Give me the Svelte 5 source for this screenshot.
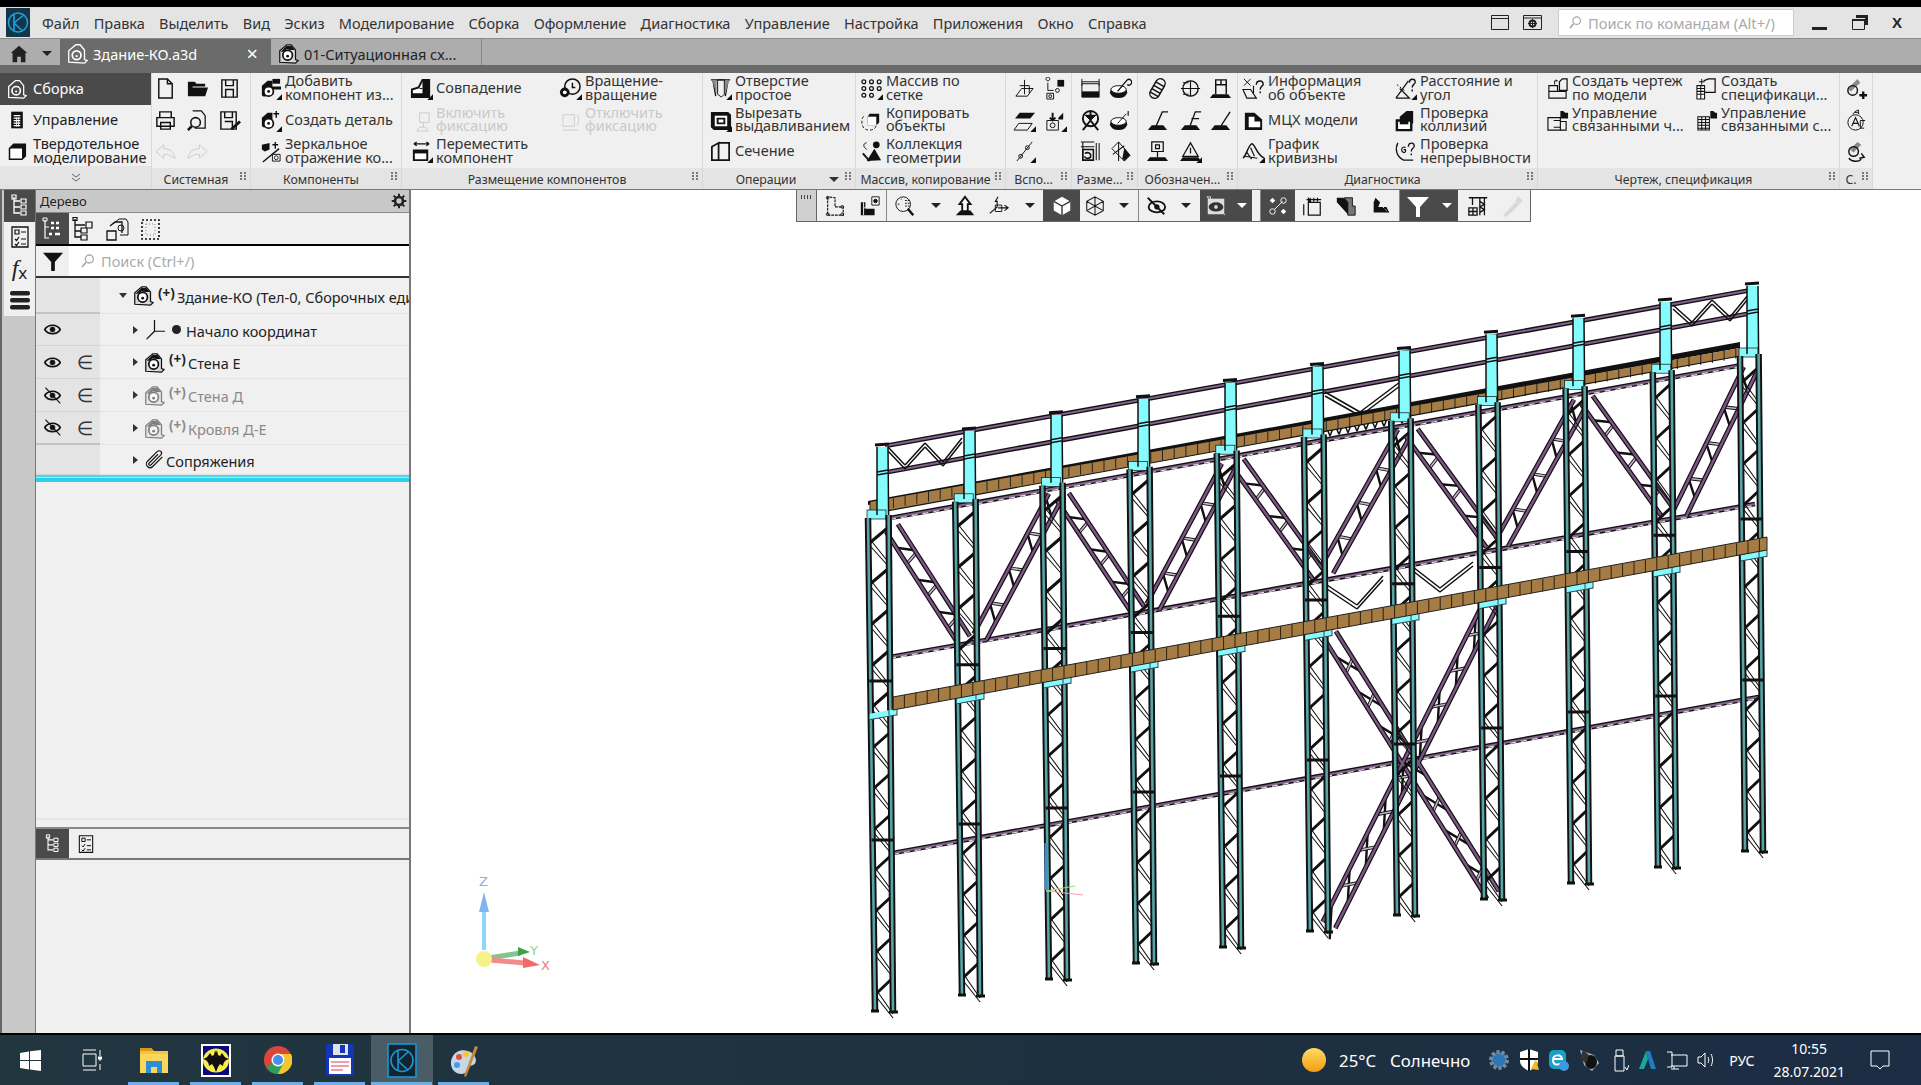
<script>
const menu=['Файл','Правка','Выделить','Вид','Эскиз','Моделирование','Сборка','Оформление','Диагностика','Управление','Настройка','Приложения','Окно','Справка'];
const tri='<path d="M24 18v6h-6z" fill="#111" stroke="none"/>';
const asm='<path d="M2 22V9l8-7h5l5 6v11l3 1-3 3z" fill="#d8d8d8" stroke="#111" stroke-width="1.400"/><path d="M3 10l7-7h5l4 5-5 0-4-1-4 3z" fill="#111" stroke="none"/><circle cx="11" cy="14" r="5.500" fill="#fff" stroke="#111" stroke-width="2"/><circle cx="11" cy="15" r="1.600" fill="#111" stroke="none"/>';
const I={
asm,
asmw:'<path d="M2 22V9l8-7h5l5 6v11l3 1-3 3z" fill="none" stroke="#fff" stroke-width="1.500"/><circle cx="11" cy="14" r="5" fill="none" stroke="#fff" stroke-width="2"/><circle cx="11" cy="15" r="1.300" fill="#fff" stroke="none"/>',
asmg:'<g opacity=".5">'+asm+'</g>',
mgmt:'<path d="M5 2h14v20H5z" fill="#111" stroke="none"/><path d="M8 6h8v1.500H8zM8 9h8v1.500H8zM8 12h8v1.500H8zM8 15h8v1.500H8zM8 18h8v1.500H8z" fill="#fff" stroke="none"/><path d="M11.500 9v11M14 9v11" stroke="#fff"/>',
solid:'<path d="M8 4h14v14l-4 4H3V9z" fill="#fff" stroke="#111" stroke-width="1.800"/><path d="M8 4h14v14l-4 4V9H3z" fill="#111" stroke="none"/>',
new:'<path d="M5 2h9l5 5v15H5z" stroke-width="1.500"/><path d="M14 2v5h5" stroke-width="1.500"/>',
open:'<path d="M2 20V5h7l2 2h9v3H7l-3 10zM6 11h17l-3 9H3z" fill="#111" stroke="none"/>',
save:'<path d="M4 3h16v18H4z" stroke-width="1.500"/><path d="M8 3v6h8V3M8 21v-8h8v8" stroke-width="1.500"/>',
print:'<path d="M6 3h12v6H6zM3 9h18v9H3zM7 14h10v7H7z" fill="#f0f0f0" stroke-width="1.500"/>',
preview:'<path d="M7 2h9l4 5v13H9" stroke-width="1.300"/><circle cx="10" cy="14" r="5" stroke-width="1.600"/><path d="M6 18l-4 4" stroke-width="2.600"/>',
saveas:'<path d="M3 3h16v18H3z" stroke-width="1.500"/><path d="M7 3v6h8V3M7 13h8v8" stroke-width="1.500"/><path d="M13 20l9-8 2 2-9 8z" fill="#111" stroke="none"/>',
undo:'<path d="M10 5l-8 7 8 7v-4h4l8 4c-1-6-5-10-12-10z" stroke="#ccc"/>',
redo:'<path d="M14 5l8 7-8 7v-4h-4l-8 4c1-6 5-10 12-10z" stroke="#ccc"/>',
add:'<path d="M3 9l6-5h5v6h9v3H14v1a8 8 0 0 1-10 6l-1-1z" fill="#111" stroke="none"/><circle cx="10" cy="15" r="5" fill="#fff" stroke="#111" stroke-width="1.800"/><circle cx="10" cy="15" r="1.500" fill="#111" stroke="none"/><path d="M14 2h8v5h-8z" fill="#111" stroke="none"/>'+tri,
part:'<path d="M3 9l6-5h5v15H4l-1-2z" fill="#111" stroke="none"/><circle cx="10" cy="15" r="5" fill="#fff" stroke="#111" stroke-width="1.800"/><circle cx="10" cy="15" r="1.500" fill="#111" stroke="none"/><path d="M18 2v7M15 5h6" stroke-width="1.500"/>'+tri,
mirror:'<path d="M3 5l8-2v7l-5 2-3-2z" fill="#111" stroke="none"/><path d="M17 2v7M14 5h6M4 23L21 9" stroke-width="1.400"/><path d="M14 15h8v7h-8z" fill="#fff"/><circle cx="18" cy="18.500" r="2"/>',
coin:'<path d="M2 21v-8l7-2 4-8h7v18z" fill="#fff" stroke="#111" stroke-width="2"/><path d="M13 3h7v14h-7zM2 17h18v4H2z" fill="#111" stroke="none"/><path d="M10 12h3" stroke="#111"/>'+tri,
fixon:'<g stroke="#ccc"><path d="M10 4h10v10H10zM14 14v5M7 23h12l-3-4h-6z"/></g>',
fixoff:'<g stroke="#ccc"><path d="M4 6h12v12H4zM19 6c2 2 2 8 0 11M4 22h16"/></g>',
move:'<path d="M4 4h16M4 4l3-2M4 4l3 2M20 4l-3-2M20 4l-3 2" stroke-width="1.200"/><path d="M4 11h14v10H4z" fill="#fff" stroke-width="2"/><path d="M4 11h14v3H4z" fill="#111" stroke="none"/>'+tri,
rot:'<circle cx="14" cy="10" r="8" stroke-width="1.600"/><path d="M14 6v5h3" stroke-width="1.500"/><circle cx="6" cy="16" r="5" fill="#111" stroke="none"/><circle cx="6" cy="16" r="2" fill="#fff" stroke="none"/>'+tri,
hole:'<path d="M2 3h20M4 3l3 17M20 3l-3 17" stroke-width="1.400"/><path d="M3 3h5v15z" fill="#888" stroke="none"/><path d="M16 3h5l-4 15z" fill="#888" stroke="none"/><path d="M9 3h7v15l-3 3-4-3z"/>'+tri,
cut:'<path d="M2 3h18l3 3v16H5l-3-3z" fill="#111" stroke="none"/><path d="M6 7h13v11H6z" fill="#fff" stroke="none"/><path d="M9 10h7v5H9z" stroke-width="2"/>'+tri,
sect:'<path d="M3 7l7-4v18H3zM10 3h11v18H10" stroke-width="1.800"/>',
arr:'<g stroke-width="1.300"><circle cx="4" cy="5" r="2"/><circle cx="12" cy="5" r="2"/><circle cx="20" cy="5" r="2"/><circle cx="4" cy="12" r="2"/><circle cx="12" cy="12" r="2"/><circle cx="20" cy="12" r="2"/><circle cx="4" cy="19" r="2"/><circle cx="12" cy="19" r="2"/></g>'+tri,
copy:'<path d="M10 5h10v9l-3 3H8V8z" fill="#111" stroke="none"/><path d="M8 8h9v9H8z" fill="#fff" stroke="none"/><path d="M4 8c-2 0-2 4-2 6 0 5 3 8 8 8 3 0 6-1 7-5" stroke-dasharray="3 2"/>',
coll:'<circle cx="17" cy="5" r="3.500" fill="#111" stroke="none"/><path d="M7 3c-3 0-4 3-2 5l2 2" /><path d="M7 22L15 9l7 12z" fill="#111" stroke="none"/><path d="M3 14l7 8" stroke="#111" stroke-width="2"/>',
aux1:'<path d="M3 20l6-8h12l-6 8z"/><path d="M12 3v15M7 9h10v8" />',
aux2:'<path d="M4 4a2 2 0 1 1 .1 0M4 6v8h6"/><path d="M14 3h7v7h-7z" fill="#111" stroke="none"/><circle cx="14" cy="14" r="2"/><path d="M3 17h7v6H3z"/><circle cx="6.500" cy="20" r="1.500"/>',
aux3:'<path d="M2 10l5-6h16l-5 6z" fill="#111" stroke="none"/><path d="M1 22l5-7h14l-5 7z"/>'+tri,
aux4:'<path d="M3 12h12v10H3z"/><path d="M15 9l5-5v7h-5z" fill="#111" stroke="none"/><path d="M9 4v8M6 9l3 3 3-3" stroke-width="2"/><circle cx="9" cy="17" r="2.500"/>'+tri,
aux5:'<path d="M4 22l16-20"/><circle cx="8" cy="17" r="2"/><circle cx="15" cy="8" r="2"/>'+tri,
dim1:'<path d="M3 2v7M21 2v7M3 5h18" /><path d="M3 7v14h18V7z" /><path d="M3 15h18v6H3z" fill="#111" stroke="none"/>',
dim2:'<ellipse cx="10" cy="16" rx="9" ry="6" fill="#111" stroke="none"/><ellipse cx="10" cy="13" rx="8" ry="4" fill="#fff" stroke="#111"/><path d="M9 15l10-12M19 3a3 3 0 1 1 0 5" stroke-width="1.400"/>',
dim3:'<circle cx="12" cy="10" r="8" stroke-width="2"/><path d="M12 2v10M4 22l8-10 8 10" stroke-width="2"/><path d="M6 6l6 6 6-6" fill="#111"/>',
dim4:'<ellipse cx="10" cy="16" rx="9" ry="6" fill="#111" stroke="none"/><ellipse cx="10" cy="13" rx="8" ry="4" fill="#fff" stroke="#111"/><path d="M9 15l9-10"/><path d="M20 2v5" stroke-width="1.200"/>',
dim5:'<path d="M2 2h14M2 7h14M4 2v20M18 3v18M21 3v18" stroke-width="1.100"/><path d="M4 10h11v11H4z" stroke-width="1.600"/><path d="M6 14c4-2 7 0 6 4-3 2-6 1-6-1" stroke-width="1.600"/>',
dim6:'<path d="M10 2l12 14-6 6L3 9z"/><path d="M10 2v20M4 15l12-9" stroke-width="1.100"/><path d="M16 8l6 8-6 6-2-3z" fill="#111" stroke="none"/>',
sym1:'<g transform="rotate(30 12 12)"><rect x="7" y="1" width="10" height="22" rx="5" stroke-width="1.500"/><path d="M7 7h10M7 11h10M7 15h10M7 19h10" stroke-width="1.500"/></g>',
sym2:'<circle cx="12" cy="12" r="8" stroke-width="1.400"/><path d="M2 12h20M12 4v16" stroke-width="1.200"/><path d="M4 6h6M4 18h6"/>',
sym3:'<path d="M2 22h20l-4-5H6z" fill="#111" stroke="none"/><path d="M10 19L17 3h6" stroke-width="1.400"/>',
sym4:'<path d="M2 22h20l-4-5H6z" fill="#111" stroke="none"/><path d="M11 19L17 3h6M13 10h8" stroke-width="1.400"/>',
sym5:'<path d="M2 22h20l-4-5H6z" fill="#111" stroke="none"/><path d="M8 18l3 2L22 3" stroke-width="1.400"/>',
sym6:'<path d="M1 22h22l-3-4H4z" fill="#111" stroke="none"/><path d="M12 18v-6M6 2h12v10H6zM10 5h4v4h-4z" stroke-width="1.300"/>',
sym7:'<path d="M1 22h22l-3-4H4z" fill="#111" stroke="none"/><path d="M7 18V3h11v15M7 8h11M12.500 3v5" stroke-width="1.500"/>',
sym8:'<path d="M1 22h22l-3-4H4z" fill="#111" stroke="none"/><path d="M4 17L12 3l8 14zM12 8v6" stroke-width="1.300"/>'+tri,
info:'<path d="M2 2l7 7M2 9l7-7" stroke-width="1"/><path d="M1 13h8l6 9H5zM12 9v8" stroke-width="1.200"/><path d="M15 8c0-5 8-5 7 0-1 2-3 2-3 5M19 15v2" stroke-width="1.500"/>',
mch:'<path d="M3 4h10l8 7v11H3z" fill="#111" stroke="none"/><path d="M7 8h6v5h6v6H7z" fill="#fff" stroke="none"/>',
curve:'<path d="M1 19c3-2 6-14 9-15 4 0 4 10 13 15" stroke-width="1.500"/><path d="M5 13l5 7M9 8l4 9M3 17l13 2" stroke-width="1.200"/>'+tri,
dist:'<path d="M2 22L15 4M2 22h14L6 12" stroke-width="1.300"/><path d="M3 8l9 7" stroke-dasharray="2 2"/><path d="M16 6c0-5 7-5 6 0-1 2-3 2-3 5M19 13v2" stroke-width="1.500"/>'+tri,
coll2:'<path d="M6 21V8l7-6h7v13H9" fill="#111" stroke="none"/><path d="M3 12h15v10H3z" fill="#fff" stroke="#111" stroke-width="2.500"/><path d="M6 12h9v4H6z" fill="#111" stroke="none"/>',
cont:'<path d="M4 3c-3 6-2 14 6 18h10" stroke-width="1.300"/><path d="M8 10c0-3 3-3 4-2M8 10c0 3 3 4 4 2v-2h-2" stroke-width="1.200"/><path d="M15 7c0-5 7-5 6 0-1 2-3 2-3 5M18 14v2" stroke-width="1.400"/>',
draw1:'<path d="M3 9h9v6H3zM3 15h9M12 15h9v7H3V9" stroke-width="1.200"/><path d="M14 14V5l3-3h5v12h-8z" stroke-width="1.300"/><path d="M9 8V4h3M10 3l2 1" />',
spec1:'<path d="M9 4l5-2h7v14H9" stroke-width="1.300"/><path d="M2 9h8v14H2zM2 12h8M2 15h8M2 18h8M6 9v14" fill="#fff" stroke-width="1.100"/><path d="M4 5h6M7 2v6"/>',
draw2:'<path d="M2 9h13v13H2zM8 12h7v7H8" stroke-width="1.200"/><path d="M15 2h3l2 2h3v6h-8z" fill="#111" stroke="none"/><path d="M15 13h6v9h-6" stroke-width="1.200"/>',
spec2:'<path d="M3 8h12v14H3zM3 11h12M3 14h12M3 17h12M3 20h12M7 8v14M11 8v14" stroke-width="1.100"/><path d="M16 2h3l2 2h2v6h-7z" fill="#111" stroke="none"/>',
bolt1:'<path d="M3 12l10-10 3 4-10 9z" fill="#888" stroke="none"/><circle cx="8" cy="14" r="5" stroke-width="1.500"/><path d="M15 19h8M19 15v8" stroke-width="2.500"/>',
bolt2:'<circle cx="11" cy="14" r="8"/><path d="M7 18l4-9 4 9M8.500 15h5" stroke-width="1.200"/><path d="M16 12h5M16 12v8h4" stroke-width="1"/><path d="M10 3l4-2v4M8 5c2-2 5-2 7 0"/>',
bolt3:'<path d="M5 10l8-8 4 3-8 8z" fill="#888" stroke="none"/><circle cx="9" cy="12" r="5" stroke-width="1.500"/><path d="M4 19c3 4 10 4 13 1M17 14l3 4-5 1" stroke-width="1.500"/>',
vL:'<path d="M4 2v20h17V13h-9V3z" stroke-width="1.200" stroke-dasharray="3 1"/><circle cx="4" cy="3" r="1.500"/><circle cx="4" cy="21" r="1.500"/><circle cx="20" cy="21" r="1.500"/><circle cx="20" cy="13" r="1.500"/>',
vT:'<path d="M2 22V8h5V22zM7 22V15h10v7z" fill="#111" stroke="none"/><path d="M5 22V8M5 15l3-3" stroke="#fff"/><path d="M14 2h8v9h-8z" fill="#fff"/><circle cx="18" cy="6.500" r="2" fill="#111"/>',
vZ:'<circle cx="10" cy="10" r="8"/><path d="M15 15l6 7" stroke-width="2.600"/><path d="M8 4v1M12 6h5M12 9h5M12 12h5M4 10h3" stroke-dasharray="2 1"/>',
vUp:'<path d="M12 2l6 8h-3v8H9v-8H6z" fill="#fff" stroke-width="2"/><path d="M2 22l5-5h11l4 5z" fill="#111" stroke="none"/>',
vAx:'<path d="M11 2l-3 5h2v6l-8 7M11 14h10M18 11l4 3-4 3" stroke-width="1.200"/><path d="M8 11h7v7H8z"/>',
vCube:'<path d="M12 2l9 5v10l-9 5-9-5V7z" fill="#fff" stroke="none"/><path d="M3 7l9 5 9-5M12 12v10" stroke="#333" stroke-width="1.500"/>',
vBox:'<path d="M12 2l9 5v10l-9 5-9-5V7zM3 7l9 5 9-5M12 12v10M3 17l9-5 9 5M12 2v10" stroke-width="1.100"/>',
vEye:'<ellipse cx="13" cy="13" rx="9" ry="6" stroke-width="2"/><circle cx="13" cy="13" r="2.500" fill="#111"/><path d="M3 3l18 18" stroke-width="2"/>',
vEyeD:'<path d="M2 2l4 0v4M2 2l20 20" stroke="#ddd"/><path d="M3 4h18v17H3z" fill="#ddd" stroke="none"/><ellipse cx="12" cy="13" rx="8" ry="5" fill="#333" stroke="none"/><circle cx="12" cy="13" r="2" fill="#ddd" stroke="none"/>',
vSnap:'<path d="M8 16L17 7" stroke="#fff"/><circle cx="6" cy="18" r="3" stroke="#fff"/><circle cx="18" cy="6" r="3" stroke="#fff"/><path d="M6 3l3 3-3 3-3-3zM18 15l3 3-3 3-3-3z" fill="#fff" stroke="none"/>',
vWall:'<path d="M8 8h13v14H8zM6 5h16M10 3v4M14 3v4M18 3v4M3 10v12" stroke-width="1.300"/><path d="M8 3l3 5H8z" fill="#111"/>',
vWalls:'<path d="M2 3h7l6 5v14L2 8z" fill="#111" stroke="none"/><path d="M10 3h9v9h3v10H14V8z" fill="#777" stroke="#111"/>',
vBr:'<path d="M6 3l5 5-2 5 9 0 3 6H4V8z" fill="#111" stroke="none"/><path d="M8 4l3 3M11 9l3 3M14 13l4 4" stroke="#fff" stroke-dasharray="2 2"/>',
funnel:'<path d="M1 3h22l-9 10v10h-4V13z" fill="#fff" stroke="none"/>',
funk:'<path d="M1 3h22l-9 10v10h-4V13z" fill="#111" stroke="none"/>',
crane:'<path d="M2 3h20M6 3v8M14 3v19M19 3v19M14 7l5 3-5 3 5 3-5 3" stroke-width="1.400"/><path d="M2 14h9v8H2zM2 18h9M6.500 14v8" stroke-width="1.400"/>',
pipette:'<path d="M3 21l12-13 3 3-13 12-3 0zM15 6l3-4 4 4-4 4z" fill="#d8d8d8" stroke="#d8d8d8"/>',
gear:'<circle cx="12" cy="12" r="6" stroke="#222" stroke-width="4"/><path d="M12 1v4M12 19v4M1 12h4M19 12h4M4 4l3 3M17 17l3 3M4 20l3-3M17 7l3-3" stroke="#222" stroke-width="3"/>',
tree:'<path d="M6 3v16h6M6 7h6M6 13h6" stroke-width="1.300"/><path d="M4 1h4v4H4zM13 5h5v4h-5zM13 11h5v4h-5zM13 17h5v4h-5z" stroke-width="1.200"/>',
treeW:'<g stroke="#fff"><path d="M6 3v16h6M6 7h6M6 13h6" stroke-width="1.300"/><path d="M4 1h4v4H4zM13 5h5v4h-5zM13 11h5v4h-5zM13 17h5v4h-5z" stroke-width="1.200"/></g>',
list:'<path d="M4 2h16v20H4z" stroke-width="1.300"/><path d="M7 5h4v4H7zM13 7h5M7 14l1.500 1.500L11 12M13 14h5M7 19l1.500 1.500L11 17M13 19h5" stroke-width="1.200"/>',
stack:'<rect x="2" y="3" width="20" height="4.500" rx="2" fill="#222" stroke="none"/><rect x="2" y="10" width="20" height="4.500" rx="2" fill="#222" stroke="none"/><rect x="2" y="17" width="20" height="4.500" rx="2" fill="#222" stroke="none"/>',
numW:'<g stroke="#fff"><path d="M4 3v18h4M4 10h4" stroke-width="1.200"/><path d="M2 1h4v3H2z"/></g><path d="M10 6h3M15 6h3M10 11h3M15 11h3M8 17h3M14 17h5" stroke="#fff" stroke-width="2.600"/>',
tr2:'<path d="M5 2v18h6M5 8h10M5 14h6" stroke-width="1.300"/><path d="M3 0.500h4v3H3zM16 5h6v6h-6zM11 11h6v5h-6zM11 18h6v5h-6z" stroke-width="1.200"/>',
refs:'<path d="M8 7l6-5h7l2 3v13h-8"/><path d="M5 9l5-4h7v11" stroke-width="1.300"/><path d="M2 14h9v9H2z" stroke-width="1.300"/><circle cx="16" cy="11" r="3"/>',
sel:'<path d="M4 3h17v19H4z" stroke-dasharray="2 2" stroke-width="1.600"/><path d="M8 7h9v11H8z" stroke-dasharray="1 2" stroke="#888"/>',
search:'<circle cx="14" cy="9" r="6" stroke="#aaa" stroke-width="2"/><path d="M9 14l-6 7" stroke="#aaa" stroke-width="2.600"/>',
eye:'<path d="M1 12c5-8 17-8 22 0-5 8-17 8-22 0z" stroke-width="2.400"/><circle cx="12" cy="12" r="3.500" fill="#111"/>',
eyeoff:'<path d="M1 12c5-8 17-8 22 0-5 8-17 8-22 0z" stroke-width="2.400"/><circle cx="12" cy="12" r="3.500" fill="#111"/><path d="M2 1l21 22" stroke-width="1.600"/>',
axes:'<path d="M12 1v13M12 14h12M12 14L3 23" stroke-width="1.400"/>',
clip:'<path d="M21 9L10 20c-4 4-10-2-6-6L15 3c3-3 7 1 4 4L8 18c-1 2-4-1-2-2L16 6" stroke-width="1.300"/>',
home:'<path d="M12 3l9 8h-2v10h-5v-6h-4v6H5V11H3z" fill="#222" stroke="none"/>',
};
const R=[
{l:'Системная',w:99,p:2,cols:[{w:32,it:[{i:'new'},{i:'print'},{i:'undo'}]},{w:32,it:[{i:'open'},{i:'preview'},{i:'redo'}]},{w:32,it:[{i:'save'},{i:'saveas'}]}]},
{l:'Компоненты',w:151,p:8,cols:[{w:140,it:[{i:'add',t:['Добавить','компонент из...']},{i:'part',t:['Создать деталь']},{i:'mirror',t:['Зеркальное','отражение ко...']}]}]},
{l:'Размещение компонентов',w:301,p:8,cols:[{w:149,it:[{i:'coin',t:['Совпадение']},{i:'fixon',t:['Включить','фиксацию'],d:1},{i:'move',t:['Переместить','компонент']}]},{w:140,it:[{i:'rot',t:['Вращение-','вращение']},{i:'fixoff',t:['Отключить','фиксацию'],d:1}]}]},
{l:'Операции',w:153,p:6,a:1,cols:[{w:145,it:[{i:'hole',t:['Отверстие','простое']},{i:'cut',t:['Вырезать','выдавливанием']},{i:'sect',t:['Сечение']}]}]},
{l:'Массив, копирование',w:150,p:4,cols:[{w:145,it:[{i:'arr',t:['Массив по','сетке']},{i:'copy',t:['Копировать','объекты']},{i:'coll',t:['Коллекция','геометрии']}]}]},
{l:'Вспо...',w:66,p:7,cols:[{w:31,it:[{i:'aux1'},{i:'aux3'},{i:'aux5'}]},{w:28,it:[{i:'aux2'},{i:'aux4'}]}]},
{l:'Разме...',w:66,p:7,cols:[{w:30,it:[{i:'dim1'},{i:'dim3'},{i:'dim5'}]},{w:28,it:[{i:'dim2'},{i:'dim4'},{i:'dim6'}]}]},
{l:'Обозначен...',w:100,p:8,cols:[{w:33,it:[{i:'sym1'},{i:'sym3'},{i:'sym6'}]},{w:30,it:[{i:'sym2'},{i:'sym4'},{i:'sym8'}]},{w:28,it:[{i:'sym7'},{i:'sym5'}]}]},
{l:'Диагностика',w:300,p:4,cols:[{w:152,it:[{i:'info',t:['Информация','об объекте']},{i:'mch',t:['МЦХ модели']},{i:'curve',t:['График','кривизны']}]},{w:140,it:[{i:'dist',t:['Расстояние и','угол']},{i:'coll2',t:['Проверка','коллизий']},{i:'cont',t:['Проверка','непрерывности']}]}]},
{l:'Чертеж, спецификация',w:302,p:8,cols:[{w:149,it:[{i:'draw1',t:['Создать чертеж','по модели']},{i:'draw2',t:['Управление','связанными ч...']}]},{w:140,it:[{i:'spec1',t:['Создать','спецификаци...']},{i:'spec2',t:['Управление','связанными с...']}]}]},
{l:'С.',w:33,p:5,cols:[{w:26,it:[{i:'bolt1'},{i:'bolt2'},{i:'bolt3'}]}]},
];
const VT=[
{w:36,i:'vL'},{w:34,i:'vT',s:1},{w:36,i:'vZ'},{w:26,a:1},{w:32,i:'vUp'},{w:36,i:'vAx'},{w:26,a:1},
{w:37,i:'vCube',k:1},{w:30,i:'vBox'},{w:29,a:1,s:1},{w:33,i:'vEye'},{w:28,a:1},
{w:32,i:'vEyeD',k:1},{w:20,a:1,k:1},{w:9,s:1},{w:34,i:'vSnap',k:1},{w:34,i:'vWall'},{w:34,i:'vWalls'},{w:37,i:'vBr',s:1},
{w:36,i:'funnel',k:1},{w:22,a:1,k:1},{w:3},{w:34,i:'crane'},{w:35,i:'pipette'},
];
const rows=[
{name:'Здание-КО (Тел-0, Сборочных единиц-2, Деталей-0)',ic:'asm',pl:1,ind:83,open:1,eye:'',sep:1},
{name:'Начало координат',ic:'axes',dot:1,ind:97,eye:'eye'},
{name:'Стена Е',ic:'asm',pl:1,ind:97,eye:'eye',el:1},
{name:'Стена Д',ic:'asmg',pl:1,ind:97,eye:'eyeoff',el:1,dim:1},
{name:'Кровля Д-Е',ic:'asmg',pl:1,ind:97,eye:'eyeoff',el:1,dim:1,sep:1},
{name:'Сопряжения',ic:'clip',ind:97,eye:''},
];
// ---- model geometry
const f=n=>n.toFixed(1);
const L=(a,b,c,d)=>`M${f(a)} ${f(b)}L${f(c)} ${f(d)}`;
const g={railK:'',railP:'',railW:'',tie:'',dK:'',dT:'',dR:'',chK:'',chT:'',zk:'',zt:'',cyE:'',bar:'',upCell:'',loCell:'',brk:'',brkE:''};
function rail(a,b,c,d,ties){g.railK+=L(a,b,c,d);g.railP+=L(a,b,c,d);if(ties)g.railW+=L(a,b+1.5,c,d+1.5);}
rail(885,446,1757,289);rail(888,472,1752,313);rail(890,518,1742,365,1);rail(890,657,1755,504,1);rail(893,853,1764,696,1);
function diag(a,b,c,d){const dx=c-a,dy=d-b,l=Math.hypot(dx,dy),nx=-dy/l*7,ny=dx/l*7;
g.dK+=L(a+nx,b+ny,c+nx,d+ny)+L(a-nx,b-ny,c-nx,d-ny);
const n=Math.round(l/20);for(let k=1;k<n;k++){const t=k/n;const ax=a+dx*t+nx,ay=b+dy*t+ny;const s=t+(k%2?.09:-.03);const bx=a+dx*s-nx,by=b+dy*s-ny;if(k%2)g.dT+=L(ax,ay,bx,by);else g.dR+=L(ax,ay,bx,by);}}
[[892,528,964,640],[980,637,1055,497],[1063,497,1138,610],[1153,607,1228,467],[1238,463,1320,577],[1327,570,1404,433],[1412,433,1492,543],[1502,543,1580,403],[1587,400,1668,513],[1680,513,1750,370],[1330,635,1493,895],[1491,603,1329,925]].forEach(d=>diag(...d));
function poly(pts,key){for(let i=0;i<pts.length-1;i++)g[key]+=L(pts[i][0],pts[i][1],pts[i+1][0],pts[i+1][1]);}
const dbl=p=>{poly(p,'tie');poly(p.map(q=>[q[0],q[1]+4]),'tie');};
dbl([[888,447],[905,465],[925,443],[943,462],[962,438]]);
dbl([[1673,305],[1692,322],[1712,300],[1730,317],[1748,295]]);
dbl([[1325,392],[1360,412],[1400,382]]);
dbl([[1327,585],[1357,605],[1383,576]]);dbl([[1413,567],[1440,588],[1473,562]]);
for(let x=1325;x<1400;x+=9){g.tie+=L(x,424-(x-1325)*.177,x+5,436-(x-1325)*.177)+L(x+5,436-(x-1325)*.177,x+10,423-(x-1325)*.177);}
const cols=[];
for(let i=0;i<11;i++){
 const rt=888+87*i,yt=447-16.1*i,rb=893+87*i,yb=1011-16*i,lt=868+87.2*i,yl=518-16.2*i,lb=875+87*i;
 const lx=y=>lt+(lb-lt)*(y-yl)/(yb-yl),rx=y=>rt+(rb-rt)*(y-yt)/(yb-yt);
 const ys=yt+68;
 g.chK+=L(lt,yl,lb,yb)+L(rx(ys),ys,rb,yb);
 g.chT+=L(lt,yl,lb,yb)+L(rx(ys),ys,rb,yb);
 g.cyE+=L(rt,yt,rx(ys),ys)+L(rt-11,yt,rt-11,ys)+L(rt-11,yt+25,rt,yt+23)+L(rt-11,yt+28,rt,yt+26);
 g.bar+=L(rt-13,yt-2,rt+1,yt-3);
 g.bar+=L(lx(yb)-4,yb,lx(yb)+4,yb)+L(rb-4,yb+1,rb+5,yb+1);
 cols.push({x:rt-11,y:yt,h:70,lx:lt,ly:yl-8});
 for(let y=yb-16;y>yl+12;y-=41){const a=lx(y),b=rx(y-17),c=rx(y+23);g.zk+=L(a,y,b,y-17);g.zt+=L(a,y,c,y+23)+L(a+3,y-3,c,y+19);}
 const by=840-16*i,my=681-16.2*i;
 g.bar+=L(lx(by)-1,by,rx(by)+2,by)+L(lx(my)-1,my,rx(my)+2,my);
 const bb=709.5-.1822*(rb-893);
 const x0=lx(bb)-1,x1=rb+4;
 g.brk+=`M${f(x0)} ${f(bb+(rb-x0)*.18)}L${f(x1)} ${f(bb-4*.18)}v6L${f(x0)} ${f(bb+(rb-x0)*.18+6)}z`;
 g.brkE+=L(x0,bb+(rb-x0)*.18+6,x1,bb-4*.18+6)+L(rb-4,bb,rb-4,bb+6)+L(rb+4,bb-1,rb+4,bb+6);
}
for(let x=870;x<1740;x+=11.7){const y=502-.177*(x-870);g.upCell+=L(x,y,x,y+10);}
for(let x=893;x<1767;x+=11.4){const y=697-.1822*(x-893);g.loCell+=L(x,y,x,y+12.7);}
const taskU=[[129,51],[191,51],[253,51],[315,51],[372,61],[439,51]];
</script>

{#snippet ic(n,s=22)}
<svg class="ic" width={s} height={s} viewBox="0 0 24 24" fill="none" stroke="#111">{@html I[n]}</svg>
{/snippet}
{#snippet grip()}
<span class="grip"><i></i><i></i><i></i><i></i><i></i><i></i></span>
{/snippet}

<div class="win">
 <div class="black"></div>
 <header class="menubar">
  <div class="logo"><svg width="24" height="29" viewBox="0 0 24 29"><rect width="24" height="29" fill="#15354a"/><circle cx="12" cy="14.500" r="9.500" fill="none" stroke="#19a3dc" stroke-width="1.600"/><path d="M8 6v17M8 15L17 7.500M8 15l8 7.500" fill="none" stroke="#19a3dc" stroke-width="1.600"/></svg></div>
  <nav class="menu">{#each menu as m}<span>{m}</span>{/each}</nav>
  <div class="wtools">
   <svg width="18" height="15" viewBox="0 0 18 15"><path d="M.5.500h17v14H.5zM.5 3.500h17" fill="none" stroke="#222"/></svg>
   <svg class="wgear" width="19" height="15" viewBox="0 0 19 15"><path d="M.5.500h18v14H.5zM.5 3h18" fill="none" stroke="#222"/><circle cx="9.500" cy="8.500" r="3" fill="none" stroke="#222" stroke-width="2"/><path d="M9.500 4v9M5 8.500h9" stroke="#222"/></svg>
   <div class="cmd"><svg width="15" height="15" viewBox="0 0 24 24" fill="none">{@html I.search}</svg><span>Поиск по командам (Alt+/)</span></div>
   <svg class="wmin" width="15" height="15" viewBox="0 0 15 15"><path d="M0 12h15v3H0z" fill="#222"/></svg>
   <svg class="wmax" width="16" height="15" viewBox="0 0 16 15"><path d="M4 0h12v10h-3V3H4z" fill="#222"/><path d="M.5 4.500h12v10H.5z" fill="#e4e4e4" stroke="#222"/><path d="M0 4h13v2H0z" fill="#222"/></svg>
   <span class="wclose">X</span>
  </div>
 </header>
 <div class="tabs">
  <div class="homebtn">{@render ic('home',22)}<span class="caret"></span></div>
  <div class="tab on">{@render ic('asmw',21)}<span>Здание-КО.a3d</span><b>×</b></div>
  <div class="tab">{@render ic('asm',21)}<span>01-Ситуационная сх...</span></div>
 </div>
 <div class="strip"></div>
 <section class="ribbon">
  <div class="modes">
   <div class="mode cur">{@render ic('asmw',20)}<span>Сборка</span></div>
   <div class="mode">{@render ic('mgmt',20)}<span>Управление</span></div>
   <div class="mode">{@render ic('solid',20)}<span>Твердотельное<br>моделирование</span></div>
   <div class="modefoot"><svg width="10" height="9" viewBox="0 0 10 9" fill="none" stroke="#666"><path d="M1 1l4 3 4-3M1 5l4 3 4-3"/></svg></div>
  </div>
  {#each R as r}
  <div class="grp" style:width="{r.w}px">
   <div class="gbody" style:padding-left="{r.p}px">
    {#each r.cols as c}
    <div class="gcol" style:width="{c.w}px">
     {#each c.it as it}
     <div class="item" class:dim={it.d}>{@render ic(it.i,23)}{#if it.t}<span class="itxt">{#each it.t as l}<span>{l}</span>{/each}</span>{/if}</div>
     {/each}
    </div>
    {/each}
   </div>
   <div class="glabel"><span>{r.l}</span>{#if r.a}<span class="caret k"></span>{/if}{@render grip()}</div>
  </div>
  {/each}
 </section>
 <main class="body">
  <aside class="rail">
   <div class="rbtns">
    <div class="rb cur">{@render ic('treeW',24)}</div>
    <div class="rb">{@render ic('list',24)}</div>
    <div class="rb fx"><em>f</em><span>x</span></div>
    <div class="rb">{@render ic('stack',24)}</div>
   </div>
  </aside>
  <div class="panel">
   <div class="phead"><span>Дерево</span>{@render ic('gear',16)}</div>
   <div class="ptools">
    <div class="pt cur">{@render ic('numW',24)}</div>
    <div class="pt p2">{@render ic('tr2',24)}</div>
    <div class="pt p3">{@render ic('refs',24)}</div>
    <div class="pt">{@render ic('sel',24)}</div>
   </div>
   <div class="psearch">
    <div class="pf">{@render ic('funk',22)}</div>
    <svg width="16" height="16" viewBox="0 0 24 24" fill="none">{@html I.search}</svg>
    <span>Поиск (Ctrl+/)</span>
   </div>
   <div class="tree">
    {#each rows as r,i}
    <div class="row" class:dim={r.dim} class:first={i==0} class:last={i==5}>
     <div class="gut" class:sep={r.sep}>
      <span class="ge">{#if r.eye}{@render ic(r.eye,17)}{/if}</span>
      <span class="gi">{#if r.el}∈{/if}</span>
     </div>
     <div class="cell" style:padding-left="{r.ind-64}px">
      <span class="arw" class:down={r.open}></span>
      {@render ic(r.ic,21)}
      {#if r.dot}<span class="dot"></span>{/if}
      {#if r.pl}<span class="pl">(+)</span>{/if}
      <span class="nm">{r.name}</span>
     </div>
    </div>
    {/each}
   </div>
   <div class="cyan"></div>
   <div class="pfill"><span class="faint"></span></div>
   <div class="ptabs">
    <div class="pt cur">{@render ic('treeW',20)}</div>
    <div class="pt">{@render ic('list',20)}</div>
   </div>
   <div class="pfill2"></div>
  </div>
  <div class="view">
   <div class="vbar">
    <div class="vgrip"><span></span></div>
    {#each VT as v}
    <div class="vb" class:k={v.k} class:s={v.s} style:width="{v.w}px">
     {#if v.i}{@render ic(v.i,v.i=='funnel'?24:22)}{/if}
     {#if v.a}<span class="caret" class:w={v.k}></span>{/if}
    </div>
    {/each}
   </div>
   <svg class="model" viewBox="411 190 1510 843" fill="none">
    <g stroke-linecap="butt">
     <path d={g.railK} stroke="#111" stroke-width="4.800"/>
     <path d={g.railP} stroke="#86608f" stroke-width="2"/>
     <path d={g.railW} stroke="#ddd" stroke-width="1.200" stroke-dasharray="6 5"/>
     <path d={g.tie} stroke="#111" stroke-width="1.500"/>
     <path d={g.dT} stroke="#111" stroke-width="2.400"/>
     <path d={g.dR} stroke="#111" stroke-width="3.400"/>
     <path d={g.dR} stroke="#c9afcf" stroke-width="1.600"/>
     <path d={g.dK} stroke="#111" stroke-width="4.800"/>
     <path d={g.dK} stroke="#7d5586" stroke-width="2.400"/>
     <path d="M868 501L1740 342V348L868 505z" fill="#111"/>
     <path d="M870 502L1740 348V356L870 514z" fill="#a67c45"/>
     <path d={g.upCell} stroke="#222" stroke-width="1"/>
     <path d="M870 514L1740 356" stroke="#111" stroke-width="1.200"/>
     {#each cols as c}
     <rect x={c.x} y={c.y} width="11" height={c.h} fill="#86fbfd"/>
     <rect x={c.lx-1} y={c.ly} width="19" height="9" fill="#86fbfd" stroke="#111" stroke-width=".7"/>
     {/each}
     <path d={g.cyE} stroke="#111" stroke-width="1.500"/>
     <path d={g.zt} stroke="#111" stroke-width="1.100"/>
     <path d={g.zk} stroke="#111" stroke-width="3"/>
     <path d={g.chK} stroke="#111" stroke-width="6.500"/>
     <path d={g.chT} stroke="#58a4a6" stroke-width="2.600"/>
     <path d={g.bar} stroke="#111" stroke-width="3"/>
     <path d={g.brk} fill="#86fbfd"/>
     <path d={g.brkE} stroke="#345" stroke-width="1"/>
     <path d="M893 697L1767 537V550L893 710z" fill="#a67c45" stroke="#222" stroke-width="1"/>
     <path d={g.loCell} stroke="#2a2014" stroke-width="1"/>
     <path d="M1046 843V890" stroke="#3f8fc6" stroke-width="3"/>
     <path d="M1046 891L1075 886" stroke="#9ce05a" stroke-width="1.200"/>
     <path d="M1046 891L1083 895" stroke="#f2a0a8" stroke-width="1.200"/>
    </g>
    <g font-family="'DejaVu Sans',sans-serif" font-size="13">
     <path d="M484 950V905" stroke="#8fd4fb" stroke-width="4"/>
     <path d="M484 892L489 912H479z" fill="#7fb6f0"/>
     <path d="M489 958L520 953" stroke="#86c48c" stroke-width="5"/>
     <path d="M518 947L530 952 518 956z" fill="#3fa048"/>
     <path d="M490 960L525 963" stroke="#f58a8a" stroke-width="5"/>
     <path d="M523 957L540 965 523 968z" fill="#f06a6a"/>
     <circle cx="484" cy="959" r="8" fill="#f6f28a"/>
     <text x="479" y="886" fill="#7fb0f0">Z</text>
     <text x="530" y="955" fill="#7fdc8a">Y</text>
     <text x="541" y="970" fill="#f27a7a">X</text>
    </g>
   </svg>
  </div>
 </main>
 <footer class="task">
  <div class="tleft">
   <div class="ti"><svg width="21" height="21" viewBox="0 0 21 21"><path d="M0 3l9-1.500V10H0zM10 1.300L21 0v10H10zM0 11h9v8.500L0 18zM10 11h11v10l-11-1.500z" fill="#fff"/></svg></div>
   <div class="ti"><svg width="20" height="22" viewBox="0 0 20 22" fill="none" stroke="#fff"><path d="M1 1h13M1 21h13M1 5h13v12H1zM18 1v6M18 10v2M18 15v6"/><rect x="16.500" y="8" width="3" height="2" fill="#fff"/></svg></div>
   <div class="ti"><svg width="28" height="26" viewBox="0 0 28 26"><path d="M0 1h11l3 3h14v22H0z" fill="#f5c33c"/><path d="M0 1h11l3 3H0z" fill="#d99a1c"/><path d="M0 7h28v19H0z" fill="#fbd65a"/><path d="M6 26V14h16v12h-5v-6h-6v6z" fill="#2b8fd8"/></svg></div>
   <div class="ti"><svg width="30" height="33" viewBox="0 0 30 33"><rect width="30" height="33" fill="#fff"/><rect x="2" y="2" width="26" height="29" fill="#0a0a7a"/><ellipse cx="15" cy="16.500" rx="13" ry="12" fill="#f7ee4a"/><path d="M2 15c4-1 5-3 7-6l2 3 2-1 1-5 1 3 1-3 1 5 2 1 2-3c2 3 3 5 7 6-4 1-6 4-6 7l-3-2-2 3-2 5-2-5-2-3-3 2c0-3-2-6-6-7z" fill="#111"/></svg></div>
   <div class="ti"><svg width="28" height="28" viewBox="0 0 28 28"><circle cx="14" cy="14" r="14" fill="#d9463a"/><path d="M14 28A14 14 0 0 0 27 8H14z" fill="#f7c62f"/><path d="M14 14L2 21A14 14 0 0 0 14 28L21 14z" fill="#2f9e52"/><circle cx="14" cy="14" r="6.500" fill="#fff"/><circle cx="14" cy="14" r="5" fill="#4b8de8"/></svg></div>
   <div class="ti"><svg width="28" height="32" viewBox="0 0 28 32"><rect width="28" height="32" rx="2" fill="#1536b8"/><rect x="7" y="0" width="15" height="11" fill="#dfe3ee"/><rect x="14" y="1" width="5" height="8" fill="#1536b8"/><rect x="3" y="14" width="22" height="16" fill="#fff"/><path d="M5 18h18M5 22h18M5 26h12" stroke="#ee7c8a" stroke-width="1.500"/></svg></div>
   <div class="ti cur"><svg width="30" height="35" viewBox="0 0 30 35" fill="none" stroke="#1697d6" stroke-width="1.600"><rect x="1" y="1" width="28" height="33" fill="#13242e"/><circle cx="15" cy="17.500" r="11"/><path d="M11 7v21M11 18L21 9M11 18l10 9"/></svg></div>
   <div class="ti"><svg width="30" height="33" viewBox="0 0 30 33"><path d="M3 14C6 6 16 4 23 9c5 4 5 11 1 12-5 1-5 3-6 6-2 4-9 4-13 0-3-3-4-9-2-13z" fill="#c8d6e6"/><circle cx="10" cy="13" r="3" fill="#e44d3a"/><circle cx="17" cy="10" r="3" fill="#f5c33c"/><circle cx="8" cy="21" r="3" fill="#3f9ee8"/><path d="M26 2l3 1-12 30-2-1z" fill="#c48a3a"/></svg></div>
   {#each taskU as u}<span class="ul" style:left="{u[0]}px" style:width="{u[1]}px"></span>{/each}
  </div>
  <div class="tray">
   <span class="sun"></span>
   <span class="wx">25°C</span><span class="wx2">Солнечно</span>
   <svg class="t1" width="22" height="22" viewBox="0 0 22 22"><circle cx="11" cy="11" r="8" fill="#2a78b8" stroke="#7c8a96" stroke-width="4" stroke-dasharray="3 2"/></svg>
   <svg class="t2" width="20" height="22" viewBox="0 0 20 22"><path d="M1 3l9-3 9 3v9c0 5-5 8-9 10-4-2-9-5-9-10z" fill="#fff"/><path d="M10 0v22M1 10h18" stroke="#111" stroke-width="2"/><path d="M12 20l5-10 3 11z" fill="#f5b921"/></svg>
   <svg class="t3" width="20" height="22" viewBox="0 0 20 22"><rect y="1" width="17" height="19" rx="5" fill="#1aa0c8"/><path d="M4 10h9c0-5-9-5-9 1s6 5 9 3" fill="none" stroke="#fff" stroke-width="2"/><circle cx="15" cy="17" r="5" fill="#3d9ae0"/></svg>
   <svg class="t4" width="22" height="24" viewBox="0 0 22 24"><path d="M2 2l14 5 5 8-7 8-8-6z" fill="#aab4bc"/><ellipse cx="13" cy="14" rx="6" ry="7" fill="#111"/><path d="M5 2l-3 8 6 6 3-9z" fill="#333"/></svg>
   <svg class="t5" width="15" height="23" viewBox="0 0 15 23" fill="none" stroke="#fff"><path d="M2 1h7v6H2zM1 7h9v15H1zM11 18l2 3 2-5"/></svg>
   <svg class="t6" width="17" height="18" viewBox="0 0 17 18"><path d="M7 0h4l6 18h-5z" fill="#1b7fc4"/><path d="M7 0L0 18h5l4-10z" fill="#19a89a"/></svg>
   <svg class="t7" width="22" height="19" viewBox="0 0 22 19" fill="none" stroke="#fff"><path d="M5 4h16v11H5M1 1h5v15H1M8 15v3M5 18h8"/></svg>
   <svg class="t8" width="20" height="18" viewBox="0 0 20 18" fill="none" stroke="#fff"><path d="M1 6h3l4-4v14l-4-4H1zM11 6c1 2 1 4 0 6M14 3c2 4 2 8 0 12" /></svg>
   <span class="lang">РУС</span>
   <div class="clock"><span>10:55</span><span>28.07.2021</span></div>
   <svg class="note" width="20" height="20" viewBox="0 0 20 20" fill="none" stroke="#fff"><path d="M1 1h18v15h-6l-3 3-3-3H1z"/></svg>
  </div>
 </footer>
</div>

<style>
:global(body){margin:0;background:#000;}
.win{width:1921px;height:1085px;display:flex;flex-direction:column;overflow:hidden;font-family:"Noto Sans","Open Sans",sans-serif;font-size:14px;color:#222;background:#000;}
.ic{display:block;flex:none;}
.black{height:7px;background:#000;flex:none;}
.menubar{height:32px;background:#e4e4e4;border-bottom:1px solid #8a8a8a;box-sizing:border-box;display:flex;align-items:center;flex:none;}
.logo{width:42px;padding-left:6px;box-sizing:border-box;display:flex;}
.menu{display:flex;gap:14.250px;font-size:14.500px;color:#333;flex:1;padding-top:1px;}
.wtools{display:flex;align-items:center;padding-right:19px;}
.wgear{margin-left:14px;}
.cmd{width:236px;height:27px;box-sizing:border-box;background:#fff;border:1px solid #ccc;margin-left:16px;display:flex;align-items:center;gap:5px;padding-left:9px;color:#aaa;font-size:14.700px;}
.wmin{margin-left:18px;}
.wmax{margin-left:25px;}
.wclose{margin-left:24px;font-weight:700;font-size:15px;font-family:"Liberation Sans",sans-serif;color:#222;}
.tabs{height:26px;background:#adadad;display:flex;align-items:stretch;flex:none;font-size:14.500px;}
.homebtn{width:60px;display:flex;align-items:center;gap:12px;padding:3px 0 0 8px;box-sizing:border-box;}
.caret{display:inline-block;width:0;height:0;border-left:5px solid transparent;border-right:5px solid transparent;border-top:5px solid #222;}
.caret.w{border-top-color:#fff;}
.caret.k{margin-left:auto;margin-right:6px;border-top-color:#333;}
.tab{width:211px;box-sizing:border-box;display:flex;align-items:center;gap:5px;padding:3px 0 0 7px;border-right:1px solid #888;position:relative;}
.tab.on{background:#6b6b6b;color:#fff;border-right:none;}
.tab b{position:absolute;right:13px;font-weight:400;font-size:20px;color:#fff;}
.strip{height:8px;background:#6b6b6b;flex:none;}
.ribbon{height:117px;display:flex;background:#f0f0f0;flex:none;border-bottom:1px solid #777;box-sizing:border-box;}
.modes{width:152px;flex:none;display:flex;flex-direction:column;border-right:1px solid #d8d8d8;box-sizing:border-box;font-size:14.500px;}
.mode{height:30.500px;display:flex;align-items:center;gap:6px;padding-left:7px;line-height:14px;}
.mode span{margin-top:-2px;}
.mode.cur{height:32px;background:#4a4a4a;color:#fff;}
.modefoot{flex:1;background:#e4e4e4;display:flex;align-items:center;justify-content:center;min-height:20px;}
.grp{display:flex;flex-direction:column;flex:none;box-sizing:border-box;border-right:1px solid #d8d8d8;}
.gbody{flex:1;display:flex;}
.gcol{display:flex;flex-direction:column;flex:none;}
.item{height:31.500px;display:flex;align-items:center;gap:3px;line-height:13.500px;color:#333;white-space:nowrap;font-size:14.500px;}
.itxt{display:flex;flex-direction:column;margin-top:-2px;}
.item.dim{color:#c9c9c9;}
.glabel{height:21px;background:#e4e4e4;display:flex;align-items:center;justify-content:center;font-size:12.300px;position:relative;white-space:nowrap;color:#333;padding:2px 10px 0 0;box-sizing:border-box;}
.glabel span:first-child{flex:1;text-align:center;}
.grip{position:absolute;right:3px;top:4px;display:grid;grid-template-columns:3px 3px;gap:1px;}
.grip i{width:2px;height:2px;background:#777;display:block;}
.body{flex:1;display:flex;min-height:0;background:#fff;}
.rail{width:36px;flex:none;box-sizing:border-box;padding-left:2px;background:#c8c8c8;border-left:2px solid #666;border-right:1px solid #777;}
.rbtns{background:#f0f0f0;}
.rb{height:31.500px;display:flex;align-items:center;justify-content:center;}
.rb.cur{background:#4a4a4a;}
.fx{font-family:"Liberation Serif",serif;}
.fx em{font-size:24px;}
.fx span{font-size:17px;font-family:"Noto Sans",sans-serif;margin-top:8px;}
.panel{width:375px;flex:none;box-sizing:border-box;border-right:2px solid #777;display:flex;flex-direction:column;background:#f0f0f0;}
.phead{height:23px;background:#c8c8c8;display:flex;align-items:center;justify-content:space-between;padding:0 2px 0 4px;font-size:13px;border-bottom:1px solid #888;box-sizing:border-box;flex:none;}
.ptools{height:33px;display:flex;align-items:center;border-bottom:2px solid #000;box-sizing:border-box;flex:none;}
.pt{width:33px;height:100%;display:flex;align-items:center;justify-content:center;}
.pt.p2{margin-left:-4px;}
.pt.p3{margin-left:2px;}
.pt.cur{background:#4a4a4a;}
.psearch{height:32px;background:#fff;border-bottom:2px solid #333;box-sizing:border-box;display:flex;align-items:center;gap:5px;color:#aaa;font-size:14.500px;flex:none;}
.pf{width:33px;height:100%;background:#f0f0f0;display:flex;align-items:center;justify-content:center;margin-right:6px;}
.tree{flex:none;overflow:hidden;}
.row{height:33px;display:flex;white-space:nowrap;box-sizing:border-box;}
.row.first{height:36px;}
.row:nth-child(2){height:32px;}
.row.last{height:30px;}
.row.dim{color:#8a8a8a;}
.gut{width:64px;flex:none;background:#e4e4e4;display:flex;align-items:center;box-sizing:border-box;border-bottom:1px solid #d4d4d4;}
.gut.sep{border-bottom:2px solid #c4c4c4;}
.ge{width:16px;margin-left:8px;display:flex;justify-content:center;}
.gi{margin-left:15px;font-size:19px;width:20px;text-align:center;color:#333;font-family:"DejaVu Sans",sans-serif;}
.cell{flex:1;display:flex;align-items:center;overflow:hidden;border-bottom:1px solid #e4e4e4;box-sizing:border-box;font-size:14.500px;}
.cell .nm{padding-top:2px;}
.row.last .nm{padding-left:1px;}
.arw{width:0;height:0;flex:none;border-top:4px solid transparent;border-bottom:4px solid transparent;border-left:5px solid #333;margin-right:6px;}
.arw.down{border-left:4px solid transparent;border-right:4px solid transparent;border-top:5px solid #333;border-bottom:none;margin-right:6px;}
.dot{width:9px;height:9px;border-radius:50%;background:#222;margin:0 5px 0 7px;flex:none;}
.pl{font-size:13.500px;font-weight:700;margin:-6px 2px 0 4px;flex:none;}
.cyan{height:7px;background:linear-gradient(#4fd6ea 0 2px,#a0ebf5 2px 3px,#2dd0ea 3px);flex:none;}
.pfill{flex:1;position:relative;border-bottom:2px solid #888;}
.faint{position:absolute;left:0;right:0;bottom:7px;height:2px;background:#e6e6e6;}
.ptabs{height:31px;display:flex;align-items:stretch;border-bottom:2px solid #777;box-sizing:border-box;flex:none;}
.ptabs .pt{height:auto;}
.pfill2{height:173px;flex:none;}
.view{flex:1;position:relative;min-width:0;background:#fff;}
.vbar{position:absolute;left:385px;top:0;height:32px;box-sizing:border-box;display:flex;background:#f0f0f0;border:1px solid #666;border-top:none;z-index:1;}
.vgrip{width:19px;background:#d0d0d0;border-right:1px solid #666;position:relative;flex:none;}
.vgrip span{position:absolute;left:4px;top:5px;width:11px;height:4px;background:repeating-linear-gradient(90deg,#444 0 1px,transparent 1px 3px);}
.vb{display:flex;align-items:center;justify-content:center;flex:none;box-sizing:border-box;}
.vb.k{background:#4a4a4a;}
.vb.s{border-right:1px solid #888;}
.model{position:absolute;left:0;top:0;width:1510px;height:843px;display:block;}
.task{height:52px;flex:none;border-top:2px solid #000;box-sizing:border-box;background:linear-gradient(90deg,#21363f,#1d3040 60%,#1c2d44);display:flex;justify-content:space-between;color:#fff;position:relative;}
.tleft{display:flex;position:relative;height:100%;margin-left:-1px;}
.ti{width:62px;display:flex;align-items:center;justify-content:center;height:100%;box-sizing:border-box;}
.ti.cur{background:#4a5c66;}
.ul{position:absolute;bottom:0;height:3px;background:#6cb0ea;}
.tray{display:flex;align-items:center;position:relative;padding-right:31px;}
.sun{width:24px;height:24px;border-radius:50%;background:linear-gradient(#ffdc62,#f39c12);margin-right:13px;}
.wx{font-size:16.800px;margin-right:14px;}
.wx2{font-size:16.800px;margin-right:18px;}
.t2,.t3,.t4,.t5,.t6,.t7,.t8{margin-left:9px;}
.t3{margin-left:10px;}
.t5{margin-left:14px;}
.t6{margin-left:10px;}
.t7{margin-left:10px;}
.lang{font-size:14px;margin-left:12px;}
.clock{display:flex;flex-direction:column;align-items:center;font-size:14px;line-height:23px;margin-left:19px;margin-right:25px;}
</style>
